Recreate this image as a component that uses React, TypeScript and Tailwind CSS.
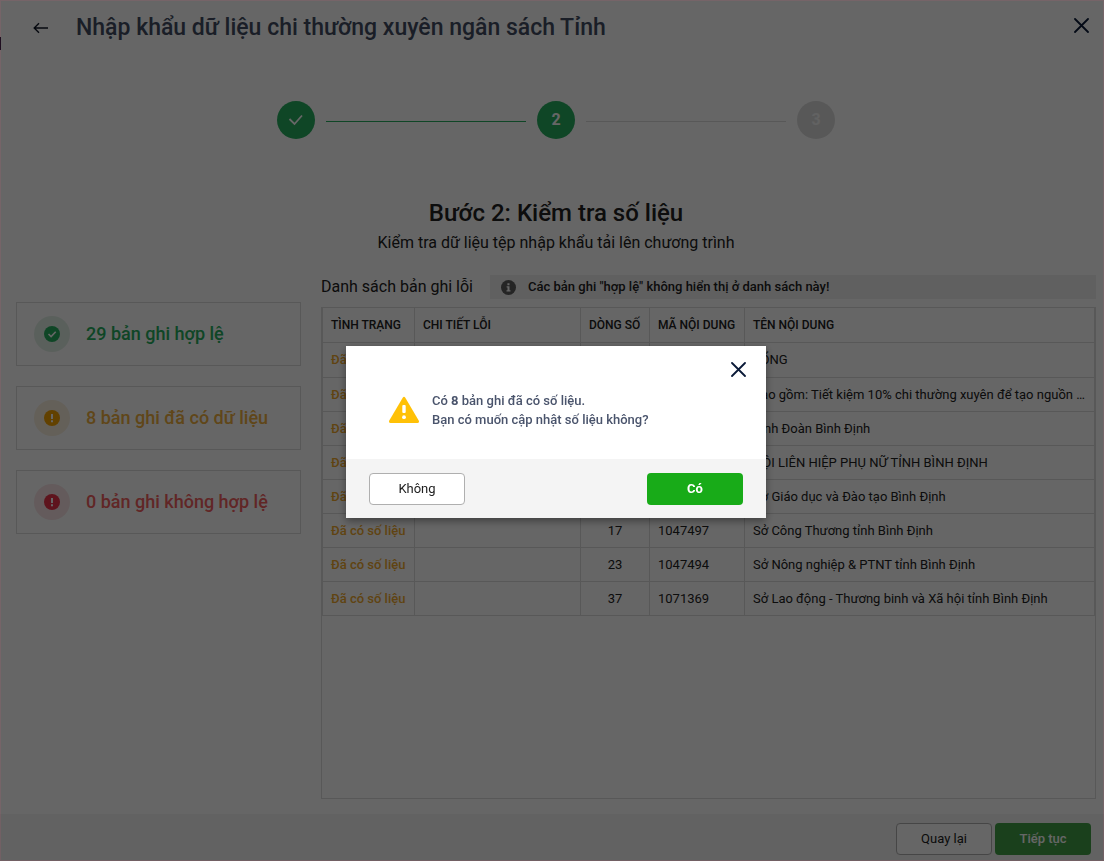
// components/ImportCheck.tsx
import type { ReactNode } from "react";

type Row = { line: string; code: string; name: string };

const rows: Row[] = [
  { line: "", code: "", name: "TỔNG" },
  { line: "", code: "", name: "Bao gồm: Tiết kiệm 10% chi thường xuyên để tạo nguồn ..." },
  { line: "", code: "", name: "Tỉnh Đoàn Bình Định" },
  { line: "", code: "", name: "HỘI LIÊN HIỆP PHỤ NỮ TỈNH BÌNH ĐỊNH" },
  { line: "", code: "", name: "Sở Giáo dục và Đào tạo Bình Định" },
  { line: "17", code: "1047497", name: "Sở Công Thương tỉnh Bình Định" },
  { line: "23", code: "1047494", name: "Sở Nông nghiệp & PTNT tỉnh Bình Định" },
  { line: "37", code: "1071369", name: "Sở Lao động - Thương binh và Xã hội tỉnh Bình Định" },
];

function CloseIcon() {
  return (
    <svg width="16" height="16" viewBox="0 0 16 16" fill="none" stroke="#0a1a38" strokeWidth="1.8" strokeLinecap="round">
      <path d="M2 2l13 13M15 2L2 15" />
    </svg>
  );
}

function ExclamationIcon({ color }: { color: string }) {
  return (
    <svg width="16" height="16" viewBox="0 0 16 16">
      <circle cx="8" cy="8" r="8" fill={color} />
      <path d="M7 4h2v5H7zM7 10.2h2v2H7z" fill="#fff" />
    </svg>
  );
}

function Summary({ icon, tint, color, children }: { icon: ReactNode; tint: string; color: string; children: ReactNode }) {
  return (
    <div className="flex h-16 items-center gap-4 border border-[#dcdcdc] pl-[17px]">
      <span className={`flex size-9 items-center justify-center rounded-full ${tint}`}>{icon}</span>
      <span className={`text-lg font-medium ${color}`}>{children}</span>
    </div>
  );
}

function Stepper() {
  return (
    <ol className="mt-[45px] flex items-center justify-center gap-[11px] text-base font-bold text-white">
      <li className="flex size-[38px] items-center justify-center rounded-full bg-[#27ae60]">
        <svg width="16" height="12" viewBox="0 0 16 12" fill="none" stroke="#fff" strokeWidth="1.8">
          <path d="M1.5 5l5 5L14 1.5" />
        </svg>
      </li>
      <li className="mt-[3px] h-px w-[200px] bg-[#27ae60]" aria-hidden="true" />
      <li className="flex size-[38px] items-center justify-center rounded-full bg-[#27ae60]">2</li>
      <li className="mt-[3px] h-px w-[200px] bg-[#dcdcdc]" aria-hidden="true" />
      <li className="flex size-[38px] items-center justify-center rounded-full bg-[#dcdcdc] text-[#f4f4f4]">3</li>
    </ol>
  );
}

function ErrorTable() {
  const cell = "border-b border-r border-[#dcdcdc] px-2 first:border-l";
  return (
    <table className="w-full table-fixed border-separate border-spacing-0 text-left text-[13px]">
      <colgroup>
        <col className="w-[93px]" />
        <col className="w-[166px]" />
        <col className="w-[69px]" />
        <col className="w-[95px]" />
        <col />
      </colgroup>
      <thead>
        <tr className="h-[35px] text-xs whitespace-nowrap">
          <th className={`${cell} font-medium`}>TÌNH TRẠNG</th>
          <th className={`${cell} font-medium`}>CHI TIẾT LỖI</th>
          <th className={`${cell} font-medium`}>DÒNG SỐ</th>
          <th className={`${cell} font-medium`}>MÃ NỘI DUNG</th>
          <th className={`${cell} font-medium`}>TÊN NỘI DUNG</th>
        </tr>
      </thead>
      <tbody>
        {rows.map((r) => (
          <tr key={r.name} className="h-[34px] first:h-[35px]">
            <td className={`${cell} font-medium whitespace-nowrap text-[#f0a92e]`}>Đã có số liệu</td>
            <td className={cell}></td>
            <td className={`${cell} text-center`}>{r.line}</td>
            <td className={cell}>{r.code}</td>
            <td className={`${cell} truncate`}>{r.name}</td>
          </tr>
        ))}
      </tbody>
    </table>
  );
}

function ConfirmDialog() {
  return (
    <div className="fixed inset-0 flex items-center justify-center bg-black/60 pt-[3px] pl-2 ring-1 ring-[#ff5078]/10 ring-inset">
      <div role="dialog" aria-modal="true" aria-labelledby="confirm-text" className="w-[420px] bg-white shadow-[0_3px_8px_rgba(0,0,0,0.4)]">
        <div className="flex h-[45px] items-center justify-end px-5">
          <button aria-label="Đóng"><CloseIcon /></button>
        </div>
        <div className="flex h-[68px] items-start gap-3 pl-[42px]">
          <svg className="mt-1" width="32" height="30" viewBox="0 0 32 30">
            <path d="M14.7 2.8Q16 .8 17.3 2.8L30.7 25.6Q31.7 28 29.5 28h-27Q.3 28 1.3 25.6z" fill="#ffc107" />
            <rect x="14.3" y="10" width="3.4" height="8" rx="1" fill="#fff" />
            <circle cx="16" cy="22.2" r="1.9" fill="#fff" />
          </svg>
          <p id="confirm-text" className="text-[13px] leading-[19px] font-medium text-[#4a546c]">
            Có <b>8</b> bản ghi đã có số liệu.<br />
            Bạn có muốn cập nhật số liệu không?
          </p>
        </div>
        <div className="flex h-[59px] items-center justify-between bg-[#f4f4f4] px-[23px] text-[13px]">
          <button className="h-8 w-24 rounded border border-[#afafaf] bg-white text-[#212121]">Không</button>
          <button className="h-8 w-24 rounded bg-[#18ab18] font-bold text-white">Có</button>
        </div>
      </div>
    </div>
  );
}

export default function App() {
  return (
    <div className="relative flex min-h-screen flex-col bg-white font-[Roboto,sans-serif] text-[#212121]">
      {/* edge of the collapsed side menu */}
      <div className="absolute top-[37px] left-0 h-[13px] w-px bg-[#0f1238]" />

      <header className="flex h-14 items-center pr-[15px] pl-[33px]">
        <button aria-label="Trở lại">
          <svg width="16" height="12" viewBox="0 0 16 12" fill="none" stroke="#111827" strokeWidth="1.4">
            <path d="M15 6H1.5M6 1.2L1.2 6 6 10.8" />
          </svg>
        </button>
        <h1 className="ml-[27px] flex-1 text-[23px] font-medium text-[#434d62]">Nhập khẩu dữ liệu chi thường xuyên ngân sách Tỉnh</h1>
        <button aria-label="Đóng" className="mb-1.5"><CloseIcon /></button>
      </header>

      <main className="flex flex-1 flex-col pr-2 pl-4">
        <Stepper />
        <h2 className="mt-[58px] text-center text-2xl font-medium">Bước 2: Kiểm tra số liệu</h2>
        <p className="mt-1 text-center text-base leading-5">Kiểm tra dữ liệu tệp nhập khẩu tải lên chương trình</p>

        <div className="mt-[22px] flex flex-1 gap-5">
          <aside className="mt-[27px] flex w-[285px] shrink-0 flex-col gap-5">
            <Summary
              tint="bg-[#e2f0e7]"
              color="text-[#27ae60]"
              icon={
                <svg width="16" height="16" viewBox="0 0 16 16" fill="none">
                  <circle cx="8" cy="8" r="8" fill="#27ae60" />
                  <path d="M4.5 8l2.6 2.6 4.6-4.8" stroke="#fff" strokeWidth="1.6" />
                </svg>
              }
            >
              29 bản ghi hợp lệ
            </Summary>
            <Summary tint="bg-[#faf0de]" color="text-[#f0b040]" icon={<ExclamationIcon color="#f5a200" />}>
              8 bản ghi đã có dữ liệu
            </Summary>
            <Summary tint="bg-[#f9e4e6]" color="text-[#f25f5f]" icon={<ExclamationIcon color="#eb3349" />}>
              0 bản ghi không hợp lệ
            </Summary>
          </aside>

          <section className="flex min-w-0 flex-1 flex-col">
            <div className="flex h-6 items-center gap-[17px]">
              <h3 className="text-base">Danh sách bản ghi lỗi</h3>
              <p className="flex h-6 flex-1 items-center gap-3 bg-[#f0f0f0] pl-[11px] text-[13px] font-medium">
                <svg width="15" height="15" viewBox="0 0 15 15">
                  <circle cx="7.5" cy="7.5" r="7.5" fill="#5c5c5c" />
                  <path d="M6.4 3.2h2.1v2H6.4zM5.6 6.2h2.9v4h1v1.3H5.5v-1.3h1V7.5h-.9z" fill="#fff" />
                </svg>
                Các bản ghi "hợp lệ" không hiển thị ở danh sách này!
              </p>
            </div>
            <div className="mt-2 mb-[15px] flex-1 border border-[#dcdcdc]">
              <ErrorTable />
            </div>
          </section>
        </div>
      </main>

      <footer className="flex h-[47px] items-center justify-end gap-[3px] bg-[#f4f4f4] pt-[3px] pr-[13px] text-[13px]">
        <button className="h-8 w-24 rounded border border-[#afafaf] bg-white">Quay lại</button>
        <button className="h-8 w-24 rounded bg-[#43a047] font-medium text-white">Tiếp tục</button>
      </footer>

      <ConfirmDialog />
    </div>
  );
}
